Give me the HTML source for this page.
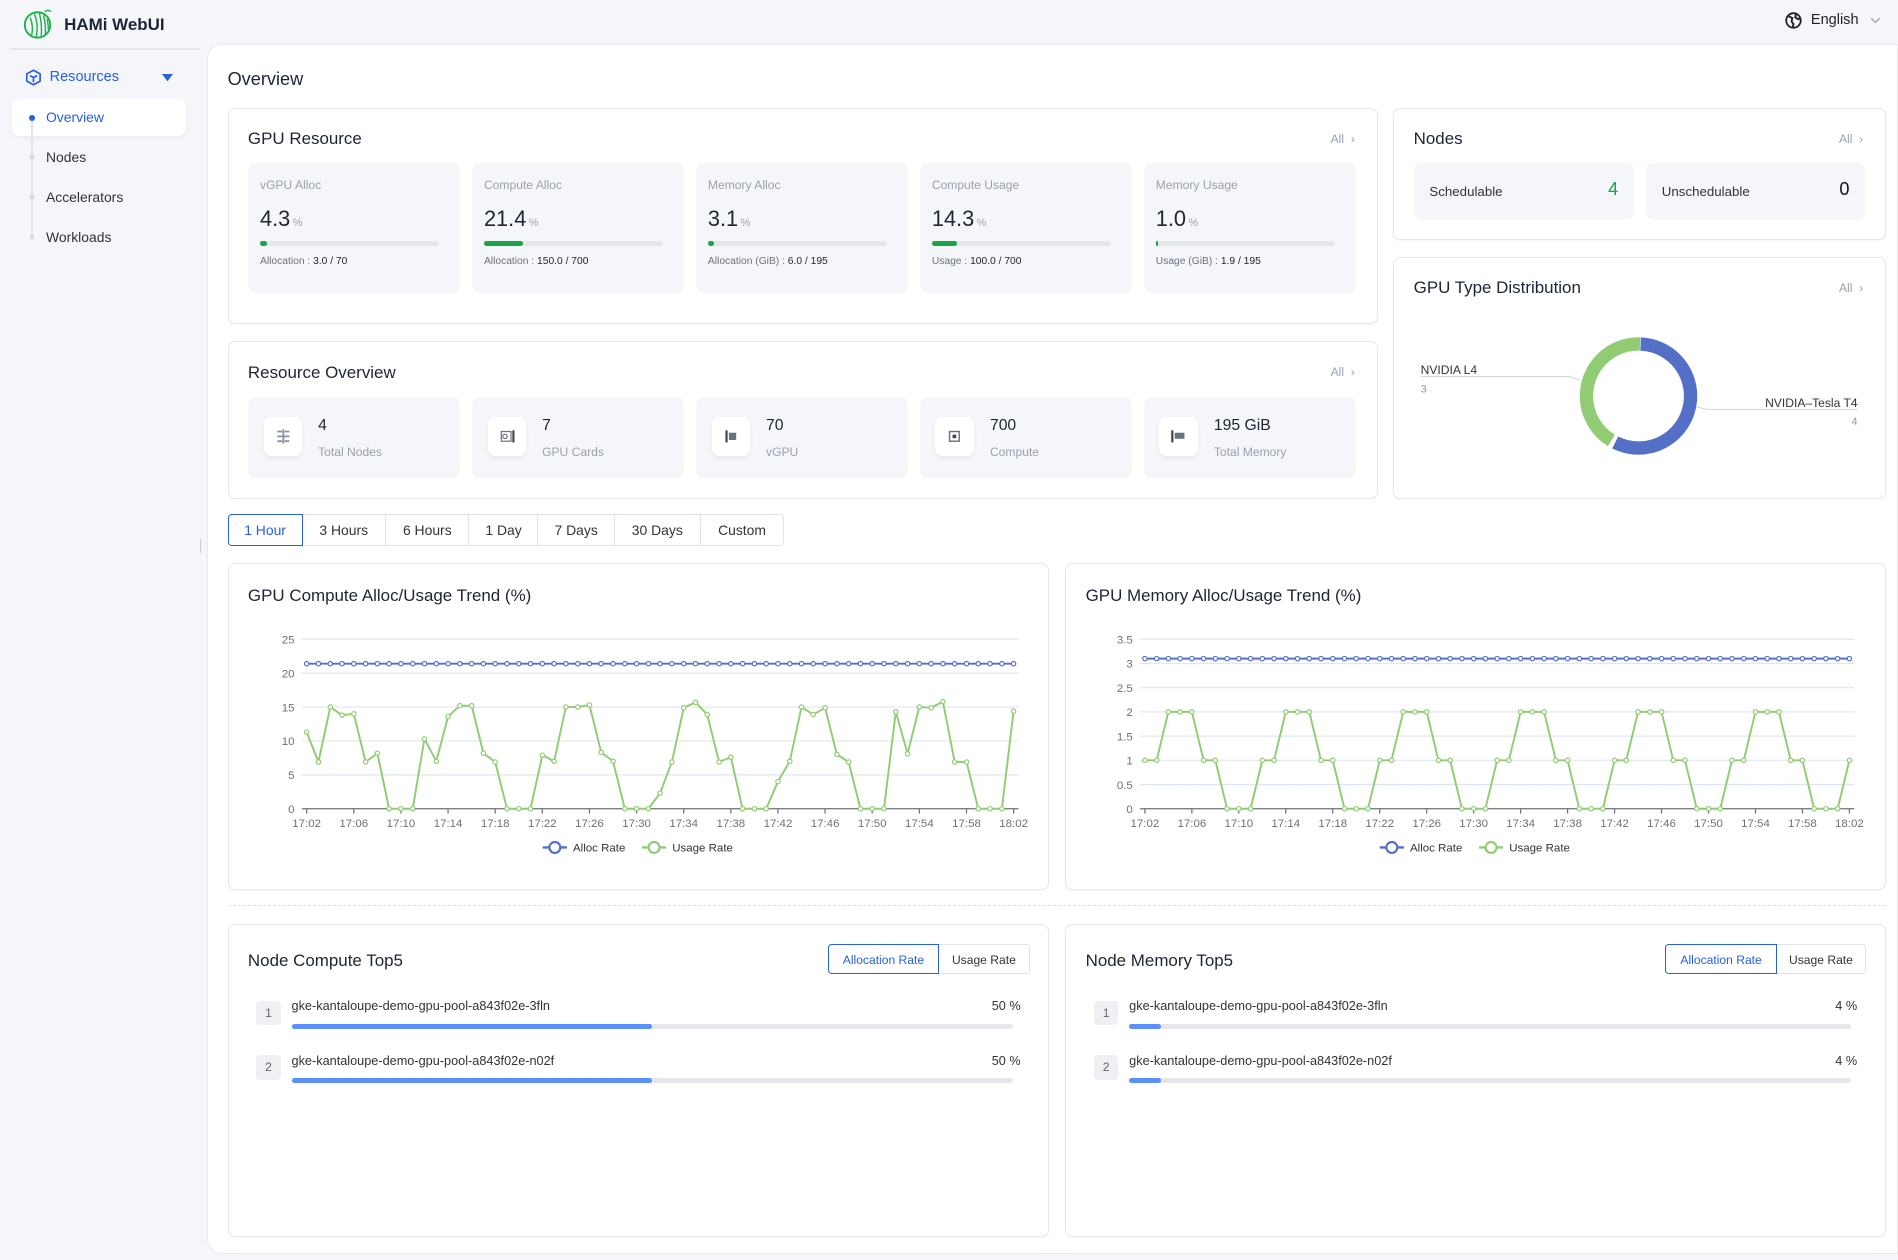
<!DOCTYPE html>
<html><head><meta charset="utf-8">
<style>
html,body{margin:0;padding:0;background:#f4f6fa;overflow:hidden;width:1898px;height:1260px}
body{font-family:"Liberation Sans",sans-serif;color:#1d2433}
#root{position:relative;width:1568px;height:1041px;zoom:1.2105}
.a{position:absolute}
.card{position:absolute;background:#fff;border:1px solid #e4e7ee;border-radius:6px;box-sizing:border-box;box-shadow:0 1px 2px rgba(0,0,0,.03)}
.ttl{position:absolute;left:16px;font-size:14px;color:#1d2433}
.all{position:absolute;right:18px;font-size:10px;color:#9aa1ad}
.box{position:absolute;background:#f5f6f9;border-radius:6px}
.lbl{position:absolute;left:10px;top:12px;font-size:10px;color:#9aa1ad}
.val{position:absolute;left:10px;top:35px;font-size:18px;color:#1d2433}
.val small{font-size:9px;color:#9aa1ad;margin-left:2px}
.bar{position:absolute;left:10px;top:64px;width:148px;height:4px;background:#e5e7eb;border-radius:2px}
.bar i{position:absolute;left:0;top:0;height:4px;background:#1aa34a;border-radius:2px}
.sub{position:absolute;left:10px;top:77px;font-size:8.5px;color:#6b7280}
.sub b{font-weight:normal;color:#1d2433}
.ic{position:absolute;left:13px;top:17px;width:32px;height:32px;background:#fff;border-radius:6px;box-shadow:0 2px 4px rgba(0,0,0,.06)}
.rv{position:absolute;left:58px;top:17px;font-size:13px}
.rl{position:absolute;left:58px;top:40px;font-size:10px;color:#9aa1ad}
.tab{position:absolute;top:425px;height:26px;line-height:26px;text-align:center;font-size:11.5px;border:1px solid #dfe2e8;box-sizing:border-box;background:#fff;color:#333}
.nav{position:absolute;left:38px;font-size:11.5px;color:#333}
.rk{position:absolute;left:23px;width:20px;height:20px;background:#eef0f4;border-radius:3px;font-size:10px;color:#666;text-align:center;line-height:20px}
.nm{position:absolute;left:52px;font-size:10.5px;color:#333}
.pc{position:absolute;right:23px;font-size:10.5px;color:#333}
.pb{position:absolute;left:52px;width:596px;height:4px;background:#e5e7eb;border-radius:2px}
.pb i{position:absolute;left:0;top:0;height:4px;background:#5b8ff9;border-radius:2px}
.btn{position:absolute;top:16px;height:25px;line-height:25px;font-size:10px;text-align:center;box-sizing:border-box;border:1px solid #dfe2e8;background:#fff;color:#333}
svg text{font-family:"Liberation Sans",sans-serif}
</style></head><body><div id="root">

<svg class="a" style="left:19px;top:7px" width="25" height="26" viewBox="0 0 25 26">
<circle cx="12" cy="14" r="10.5" fill="none" stroke="#22b24c" stroke-width="1.6"/>
<path d="M6 8 Q9 16 7 23 M9.5 5 Q13 14 11 24 M13.5 4 Q16 14 15 24 M17 6 Q19 14 18.5 22 M20 9 Q21 14 21 18" fill="none" stroke="#22b24c" stroke-width="1.2"/>
<path d="M18 3 Q21 1 23 3" fill="none" stroke="#22b24c" stroke-width="1.2"/>
</svg>
<div class="a" style="left:53px;top:12px;font-size:14px;font-weight:bold;color:#1d2433">HAMi WebUI</div>
<div class="a" style="left:8px;top:40px;width:157px;height:1px;background:#e3e6ec"></div>
<svg class="a" style="left:1475px;top:10px" width="14" height="14" viewBox="0 0 14 14"><circle cx="7" cy="7" r="6" fill="none" stroke="#222" stroke-width="1.5"/><path d="M3 3.5 L6 5 L5.5 8 L7 10 L6.5 12.5 M9 2 L8.5 4.5 L11 6 L12.5 5" fill="none" stroke="#222" stroke-width="1.6"/></svg>
<div class="a" style="left:1496px;top:10px;font-size:12px;color:#222">English</div>
<svg class="a" style="left:1545px;top:14px" width="9" height="6"><path d="M1 1 L4.5 4.5 L8 1" fill="none" stroke="#999" stroke-width="1"/></svg>

<svg class="a" style="left:21px;top:57px" width="14" height="14" viewBox="0 0 14 14"><path d="M7 1 L12.5 4 L12.5 10 L7 13 L1.5 10 L1.5 4 Z M4 5.5 L7 7 L7 11 M7 7 L10 5.5" fill="none" stroke="#2860e1" stroke-width="1.4" stroke-linejoin="round"/></svg>
<div class="a" style="left:41px;top:57px;font-size:12px;color:#2860e1">Resources</div>
<svg class="a" style="left:134px;top:61px" width="9" height="6"><path d="M0 0 L9 0 L4.5 6 Z" fill="#2860e1"/></svg>
<div class="a" style="left:10px;top:82px;width:144px;height:30px;background:#fff;border-radius:6px;box-shadow:0 1px 3px rgba(0,0,0,.05)"></div>
<div class="a" style="left:26px;top:98px;width:1px;height:100px;background:#dfe3ea"></div>
<div class="a" style="left:24px;top:95px;width:5px;height:5px;border-radius:50%;background:#2860e1"></div>
<div class="a" style="left:25px;top:128px;width:3px;height:3px;border-radius:50%;background:#d3d8e0"></div>
<div class="a" style="left:25px;top:161px;width:3px;height:3px;border-radius:50%;background:#d3d8e0"></div>
<div class="a" style="left:25px;top:194px;width:3px;height:3px;border-radius:50%;background:#d3d8e0"></div>
<div class="nav" style="top:90px;color:#2860e1">Overview</div>
<div class="nav" style="top:123px">Nodes</div>
<div class="nav" style="top:156px">Accelerators</div>
<div class="nav" style="top:189px">Workloads</div>
<div class="a" style="left:165px;top:445px;width:1px;height:12px;background:#c8cdd5"></div>

<div class="a" style="left:171px;top:36px;width:1397px;height:1000px;background:#fff;border-radius:12px 0 0 12px;border:1px solid #e7eaf0;box-sizing:border-box"></div>
<div class="a" style="left:188px;top:57px;font-size:15px">Overview</div>

<div class="card" style="left:188px;top:89px;width:950px;height:179px">
<div class="ttl" style="top:17px">GPU Resource</div><div class="all" style="top:19px">All &nbsp;›</div>
<div class="box" style="left:16px;top:45px;width:175px;height:107px"><div class="lbl">vGPU Alloc</div><div class="val">4.3<small>%</small></div><div class="bar"><i style="width:6px"></i></div><div class="sub">Allocation : <b>3.0 / 70</b></div></div>
<div class="box" style="left:201px;top:45px;width:175px;height:107px"><div class="lbl">Compute Alloc</div><div class="val">21.4<small>%</small></div><div class="bar"><i style="width:32px"></i></div><div class="sub">Allocation : <b>150.0 / 700</b></div></div>
<div class="box" style="left:386px;top:45px;width:175px;height:107px"><div class="lbl">Memory Alloc</div><div class="val">3.1<small>%</small></div><div class="bar"><i style="width:5px"></i></div><div class="sub">Allocation (GiB) : <b>6.0 / 195</b></div></div>
<div class="box" style="left:571px;top:45px;width:175px;height:107px"><div class="lbl">Compute Usage</div><div class="val">14.3<small>%</small></div><div class="bar"><i style="width:21px"></i></div><div class="sub">Usage : <b>100.0 / 700</b></div></div>
<div class="box" style="left:756px;top:45px;width:175px;height:107px"><div class="lbl">Memory Usage</div><div class="val">1.0<small>%</small></div><div class="bar"><i style="width:2px"></i></div><div class="sub">Usage (GiB) : <b>1.9 / 195</b></div></div>
</div>

<div class="card" style="left:1151px;top:89px;width:407px;height:109px">
<div class="ttl" style="top:17px">Nodes</div><div class="all" style="top:19px">All &nbsp;›</div>
<div class="box" style="left:16px;top:45px;width:182px;height:47px"><div class="a" style="left:13px;top:17px;font-size:11px;color:#333">Schedulable</div><div class="a" style="right:13px;top:13px;font-size:15px;color:#1aa34a">4</div></div>
<div class="box" style="left:208px;top:45px;width:181px;height:47px"><div class="a" style="left:13px;top:17px;font-size:11px;color:#333">Unschedulable</div><div class="a" style="right:13px;top:13px;font-size:15px;color:#111">0</div></div>
</div>

<div class="card" style="left:1151px;top:212px;width:407px;height:200px">
<div class="ttl" style="top:17px">GPU Type Distribution</div><div class="all" style="top:19px">All &nbsp;›</div>
</div>
<svg class="a" style="left:1152px;top:213px" width="405" height="198">
<circle cx="202" cy="114" r="43" fill="none" stroke="#5470c6" stroke-width="11" stroke-dasharray="153.5 116.7" stroke-dashoffset="66"/>
<circle cx="202" cy="114" r="43" fill="none" stroke="#91cc75" stroke-width="11" stroke-dasharray="112.7 157.5" stroke-dashoffset="-91"/>
<path d="M22 98 L145 98 L154 101" fill="none" stroke="#ccd3dd" stroke-width="0.8"/>
<text x="22" y="96" font-size="10" fill="#333">NVIDIA L4</text>
<text x="22" y="111" font-size="9" fill="#999">3</text>
<path d="M250 123 L258 125 L383 125" fill="none" stroke="#ccd3dd" stroke-width="0.8"/>
<text x="383" y="123" font-size="10" fill="#333" text-anchor="end">NVIDIA–Tesla T4</text>
<text x="383" y="138" font-size="9" fill="#999" text-anchor="end">4</text>
</svg>

<div class="card" style="left:188px;top:282px;width:950px;height:130px">
<div class="ttl" style="top:17px">Resource Overview</div><div class="all" style="top:19px">All &nbsp;›</div>
<div class="box" style="left:16px;top:45px;width:175px;height:67px"><div class="ic"><svg width="32" height="32"><path d="M11 12h4M17 12h4M11 16h10M11 20h4M17 20h4M16 10v12" stroke="#8a94a6" stroke-width="1.5"/></svg></div><div class="rv">4</div><div class="rl">Total Nodes</div></div>
<div class="box" style="left:201px;top:45px;width:175px;height:67px"><div class="ic"><svg width="32" height="32"><rect x="11" y="12" width="8" height="8" fill="none" stroke="#6b7280" stroke-width="1"/><circle cx="14" cy="16" r="1.8" fill="none" stroke="#6b7280"/><path d="M21 11v10" stroke="#444" stroke-width="1.8"/></svg></div><div class="rv">7</div><div class="rl">GPU Cards</div></div>
<div class="box" style="left:386px;top:45px;width:175px;height:67px"><div class="ic"><svg width="32" height="32"><path d="M12 11v10" stroke="#444" stroke-width="1.8"/><rect x="14" y="13" width="6" height="6" fill="#6b7280"/></svg></div><div class="rv">70</div><div class="rl">vGPU</div></div>
<div class="box" style="left:571px;top:45px;width:175px;height:67px"><div class="ic"><svg width="32" height="32"><rect x="12" y="12" width="8" height="8" fill="none" stroke="#6b7280" stroke-width="1.2"/><rect x="14.5" y="14.5" width="3" height="3" fill="#444"/></svg></div><div class="rv">700</div><div class="rl">Compute</div></div>
<div class="box" style="left:756px;top:45px;width:175px;height:67px"><div class="ic"><svg width="32" height="32"><path d="M11 11v10" stroke="#444" stroke-width="1.8"/><rect x="13" y="13" width="8" height="5" fill="#6b7280"/></svg></div><div class="rv">195 GiB</div><div class="rl">Total Memory</div></div>
</div>

<div class="tab" style="left:188px;width:62px;border-color:#2860e1;color:#2860e1;border-radius:3px 0 0 3px;z-index:2">1 Hour</div>
<div class="tab" style="left:249px;width:70px">3 Hours</div>
<div class="tab" style="left:318px;width:70px">6 Hours</div>
<div class="tab" style="left:387px;width:58px">1 Day</div>
<div class="tab" style="left:444px;width:64px">7 Days</div>
<div class="tab" style="left:507px;width:72px">30 Days</div>
<div class="tab" style="left:578px;width:70px;border-radius:0 3px 3px 0">Custom</div>

<div class="card" style="left:188px;top:465px;width:679px;height:270px"><div class="ttl" style="top:18px">GPU Compute Alloc/Usage Trend (%)</div></div>
<div class="card" style="left:880px;top:465px;width:678px;height:270px"><div class="ttl" style="top:18px">GPU Memory Alloc/Usage Trend (%)</div></div>
<svg id="c1" class="a" style="left:188px;top:465px" width="679" height="270"></svg>
<svg id="c2" class="a" style="left:880px;top:465px" width="678" height="270"></svg>

<div class="a" style="left:188px;top:748px;width:1370px;border-top:1px dashed #dde1e7"></div>

<div class="card" style="left:188px;top:763px;width:679px;height:259px">
<div class="ttl" style="top:22px">Node Compute Top5</div>
<div class="btn" style="left:495px;width:92px;border-color:#2860e1;color:#2860e1;border-radius:3px 0 0 3px;z-index:2">Allocation Rate</div>
<div class="btn" style="left:586px;width:76px;border-radius:0 3px 3px 0">Usage Rate</div>
<div class="rk" style="top:63px">1</div><div class="nm" style="top:61px">gke-kantaloupe-demo-gpu-pool-a843f02e-3fln</div><div class="pc" style="top:61px">50 %</div><div class="pb" style="top:82px"><i style="width:298px"></i></div>
<div class="rk" style="top:108px">2</div><div class="nm" style="top:106px">gke-kantaloupe-demo-gpu-pool-a843f02e-n02f</div><div class="pc" style="top:106px">50 %</div><div class="pb" style="top:127px"><i style="width:298px"></i></div>
</div>
<div class="card" style="left:880px;top:763px;width:678px;height:259px">
<div class="ttl" style="top:22px">Node Memory Top5</div>
<div class="btn" style="left:495px;width:92px;border-color:#2860e1;color:#2860e1;border-radius:3px 0 0 3px;z-index:2">Allocation Rate</div>
<div class="btn" style="left:586px;width:75px;border-radius:0 3px 3px 0">Usage Rate</div>
<div class="rk" style="top:63px">1</div><div class="nm" style="top:61px">gke-kantaloupe-demo-gpu-pool-a843f02e-3fln</div><div class="pc" style="top:61px">4 %</div><div class="pb" style="top:82px"><i style="width:26px"></i></div>
<div class="rk" style="top:108px">2</div><div class="nm" style="top:106px">gke-kantaloupe-demo-gpu-pool-a843f02e-n02f</div><div class="pc" style="top:106px">4 %</div><div class="pb" style="top:127px"><i style="width:26px"></i></div>
</div>

<script>
function chart(id,x0,x1,max,step,labels,alloc,usage){
 var s=document.getElementById(id),y0=63,y1=203,h='';
 function Y(v){return y1-(v/max)*(y1-y0);}
 for(var i=0;i<labels.length;i++){var v=labels[i],y=Y(v);
  h+='<line x1="'+x0+'" x2="'+x1+'" y1="'+y+'" y2="'+y+'" stroke="'+(i==0?'#6e7079':'#e0e6f1')+'" stroke-width="1"/>';
  h+='<text x="'+(x0-6)+'" y="'+(y+3.5)+'" font-size="9.5" fill="#6e7079" text-anchor="end">'+v+'</text>';}
 var n=usage.length,dx=(x1-x0-8)/(n-1),ux=x0+4;
 for(var k=0;k<=15;k++){var m=k*4,xx=ux+m*dx;
  h+='<line x1="'+xx+'" x2="'+xx+'" y1="'+y1+'" y2="'+(y1+4)+'" stroke="#6e7079"/>';
  var mm=2+m,hh=17+Math.floor(mm/60);mm=mm%60;
  h+='<text x="'+xx+'" y="'+(y1+15)+'" font-size="9.5" fill="#6e7079" text-anchor="middle">'+hh+':'+(mm<10?'0':'')+mm+'</text>';}
 function line(vals,c){var p='',d='';for(var i=0;i<vals.length;i++){var x=ux+i*dx,y=Y(vals[i]);p+=x.toFixed(1)+','+y.toFixed(1)+' ';d+='<circle cx="'+x.toFixed(1)+'" cy="'+y.toFixed(1)+'" r="1.8" fill="#fff" stroke="'+c+'" stroke-width="1"/>';}
  return '<polyline points="'+p+'" fill="none" stroke="'+c+'" stroke-width="1.6"/>'+d;}
 var a=[];for(var i=0;i<n;i++)a.push(alloc);
 h+=line(a,'#5470c6')+line(usage,'#91cc75');
 var lx=(x0+x1)/2-97;
 h+='<line x1="'+lx+'" x2="'+(lx+20)+'" y1="235" y2="235" stroke="#5470c6" stroke-width="2"/><circle cx="'+(lx+10)+'" cy="235" r="4.5" fill="#fff" stroke="#5470c6" stroke-width="1.8"/><text x="'+(lx+25)+'" y="238.5" font-size="9.5" fill="#333">Alloc Rate</text>';
 lx+=82;
 h+='<line x1="'+lx+'" x2="'+(lx+20)+'" y1="235" y2="235" stroke="#91cc75" stroke-width="2"/><circle cx="'+(lx+10)+'" cy="235" r="4.5" fill="#fff" stroke="#91cc75" stroke-width="1.8"/><text x="'+(lx+25)+'" y="238.5" font-size="9.5" fill="#333">Usage Rate</text>';
 s.innerHTML=h;}
var u1=[11.3,6.9,15,13.8,14,6.9,8.2,0,0,0,10.3,7,13.6,15.2,15.2,8.2,6.9,0,0,0,7.9,7,15,15,15.3,8.3,7,0,0,0,2.3,6.9,14.9,15.7,13.9,6.9,7.6,0,0,0,4,7,15,13.9,14.9,8,6.9,0,0,0,14.3,8.1,15,14.9,15.8,6.9,6.9,0,0,0,14.4];
var u2=[];for(var k=0;k<6;k++)u2=u2.concat([1,1,2,2,2,1,1,0,0,0]);u2.push(1);
chart('c1',61,653,25,5,[0,5,10,15,20,25],21.4,u1);
chart('c2',62,652,3.5,0.5,[0,0.5,1,1.5,2,2.5,3,3.5],3.1,u2);
</script>
</div></body></html>
